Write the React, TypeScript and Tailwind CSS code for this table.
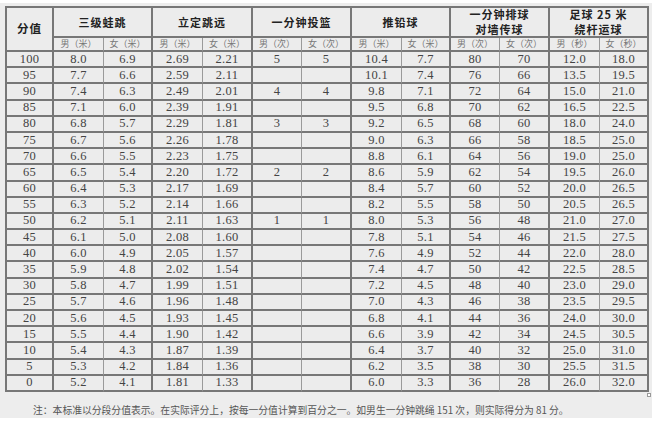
import React from "react";

const rows: string[][] = [
  ["100", "8.0", "6.9", "2.69", "2.21", "5", "5", "10.4", "7.7", "80", "70", "12.0", "18.0"],
  ["95", "7.7", "6.6", "2.59", "2.11", "", "", "10.1", "7.4", "76", "66", "13.5", "19.5"],
  ["90", "7.4", "6.3", "2.49", "2.01", "4", "4", "9.8", "7.1", "72", "64", "15.0", "21.0"],
  ["85", "7.1", "6.0", "2.39", "1.91", "", "", "9.5", "6.8", "70", "62", "16.5", "22.5"],
  ["80", "6.8", "5.7", "2.29", "1.81", "3", "3", "9.2", "6.5", "68", "60", "18.0", "24.0"],
  ["75", "6.7", "5.6", "2.26", "1.78", "", "", "9.0", "6.3", "66", "58", "18.5", "25.0"],
  ["70", "6.6", "5.5", "2.23", "1.75", "", "", "8.8", "6.1", "64", "56", "19.0", "25.0"],
  ["65", "6.5", "5.4", "2.20", "1.72", "2", "2", "8.6", "5.9", "62", "54", "19.5", "26.0"],
  ["60", "6.4", "5.3", "2.17", "1.69", "", "", "8.4", "5.7", "60", "52", "20.0", "26.5"],
  ["55", "6.3", "5.2", "2.14", "1.66", "", "", "8.2", "5.5", "58", "50", "20.5", "26.5"],
  ["50", "6.2", "5.1", "2.11", "1.63", "1", "1", "8.0", "5.3", "56", "48", "21.0", "27.0"],
  ["45", "6.1", "5.0", "2.08", "1.60", "", "", "7.8", "5.1", "54", "46", "21.5", "27.5"],
  ["40", "6.0", "4.9", "2.05", "1.57", "", "", "7.6", "4.9", "52", "44", "22.0", "28.0"],
  ["35", "5.9", "4.8", "2.02", "1.54", "", "", "7.4", "4.7", "50", "42", "22.5", "28.5"],
  ["30", "5.8", "4.7", "1.99", "1.51", "", "", "7.2", "4.5", "48", "40", "23.0", "29.0"],
  ["25", "5.7", "4.6", "1.96", "1.48", "", "", "7.0", "4.3", "46", "38", "23.5", "29.5"],
  ["20", "5.6", "4.5", "1.93", "1.45", "", "", "6.8", "4.1", "44", "36", "24.0", "30.0"],
  ["15", "5.5", "4.4", "1.90", "1.42", "", "", "6.6", "3.9", "42", "34", "24.5", "30.5"],
  ["10", "5.4", "4.3", "1.87", "1.39", "", "", "6.4", "3.7", "40", "32", "25.0", "31.0"],
  ["5", "5.3", "4.2", "1.84", "1.36", "", "", "6.2", "3.5", "38", "30", "25.5", "31.5"],
  ["0", "5.2", "4.1", "1.81", "1.33", "", "", "6.0", "3.3", "36", "28", "26.0", "32.0"],
];

const units = ["米", "米", "米", "米", "次", "次", "米", "米", "次", "次", "秒", "秒"];

const groups: React.ReactNode[] = [
  "三级蛙跳",
  "立定跳远",
  "一分钟投篮",
  "推铅球",
  <>一分钟排球<br />对墙传球</>,
  <>足球 25 米<br />绕杆运球</>,
];

// first col and female cols get the heavy group line on the right
const edge = (ci: number) =>
  ci === 0 || ci % 2 === 0 ? "border-r-2 border-r-[#777]" : "border-r border-r-[#9a9a9a]";

export default function App() {
  return (
    <div className="w-[659px] h-[424px] bg-white pt-[3px] font-['Noto_Sans_CJK_SC','Noto_Sans',sans-serif]">
      <div className="relative w-[652px] h-[415px] bg-[#ededed] pt-[3px] pl-[5px]">
        <div className="grid w-[644px] grid-cols-[47px_50px_49px_50px_50px_49px_50px_50px_49px_49px_50px_50px_49px] grid-rows-[30px_14px_repeat(21,16.19px)] border-l-2 border-t-2 border-[#777] bg-[#ececec]">
          <div className="row-span-2 flex items-center justify-center border-r-2 border-b-2 border-[#777] text-[11.5px] font-bold text-[#222] tracking-[1px]">
            分值
          </div>
          {groups.map((g, i) => (
            <div
              key={i}
              className="col-span-2 flex items-center justify-center text-center border-r-2 border-b-2 border-[#777] text-[11px] leading-[15px] font-bold text-[#222] tracking-[1px]"
            >
              <span>{g}</span>
            </div>
          ))}
          {units.map((u, i) => (
            <div
              key={i}
              className={`flex items-center justify-center border-b-2 border-b-[#777] text-[9px] leading-[10px] text-[#777] ${edge(i + 1)}`}
            >
              {i % 2 === 0 ? "男" : "女"}（{u}）
            </div>
          ))}
          {rows.map((r, ri) =>
            r.map((c, ci) => (
              <div
                key={`${ri}-${ci}`}
                className={`flex items-center justify-center border-b-2 border-b-[#777] font-['Liberation_Serif','Noto_Sans_CJK_SC',serif] text-[12.5px] leading-[13px] text-[#444] tracking-[0.3px] ${edge(ci)}`}
              >
                {c}
              </div>
            ))
          )}
        </div>
        <div className="absolute right-[1px] top-[390px] w-[4px] h-[4px] border border-[#999] bg-white" />
        <p className="mt-[12px] pl-[28px] text-[9.8px] leading-[12px] text-[#555]">
          注：本标准以分段分值表示。在实际评分上，按每一分值计算到百分之一。如男生一分钟跳绳 151 次，则实际得分为 81 分。
        </p>
      </div>
    </div>
  );
}
